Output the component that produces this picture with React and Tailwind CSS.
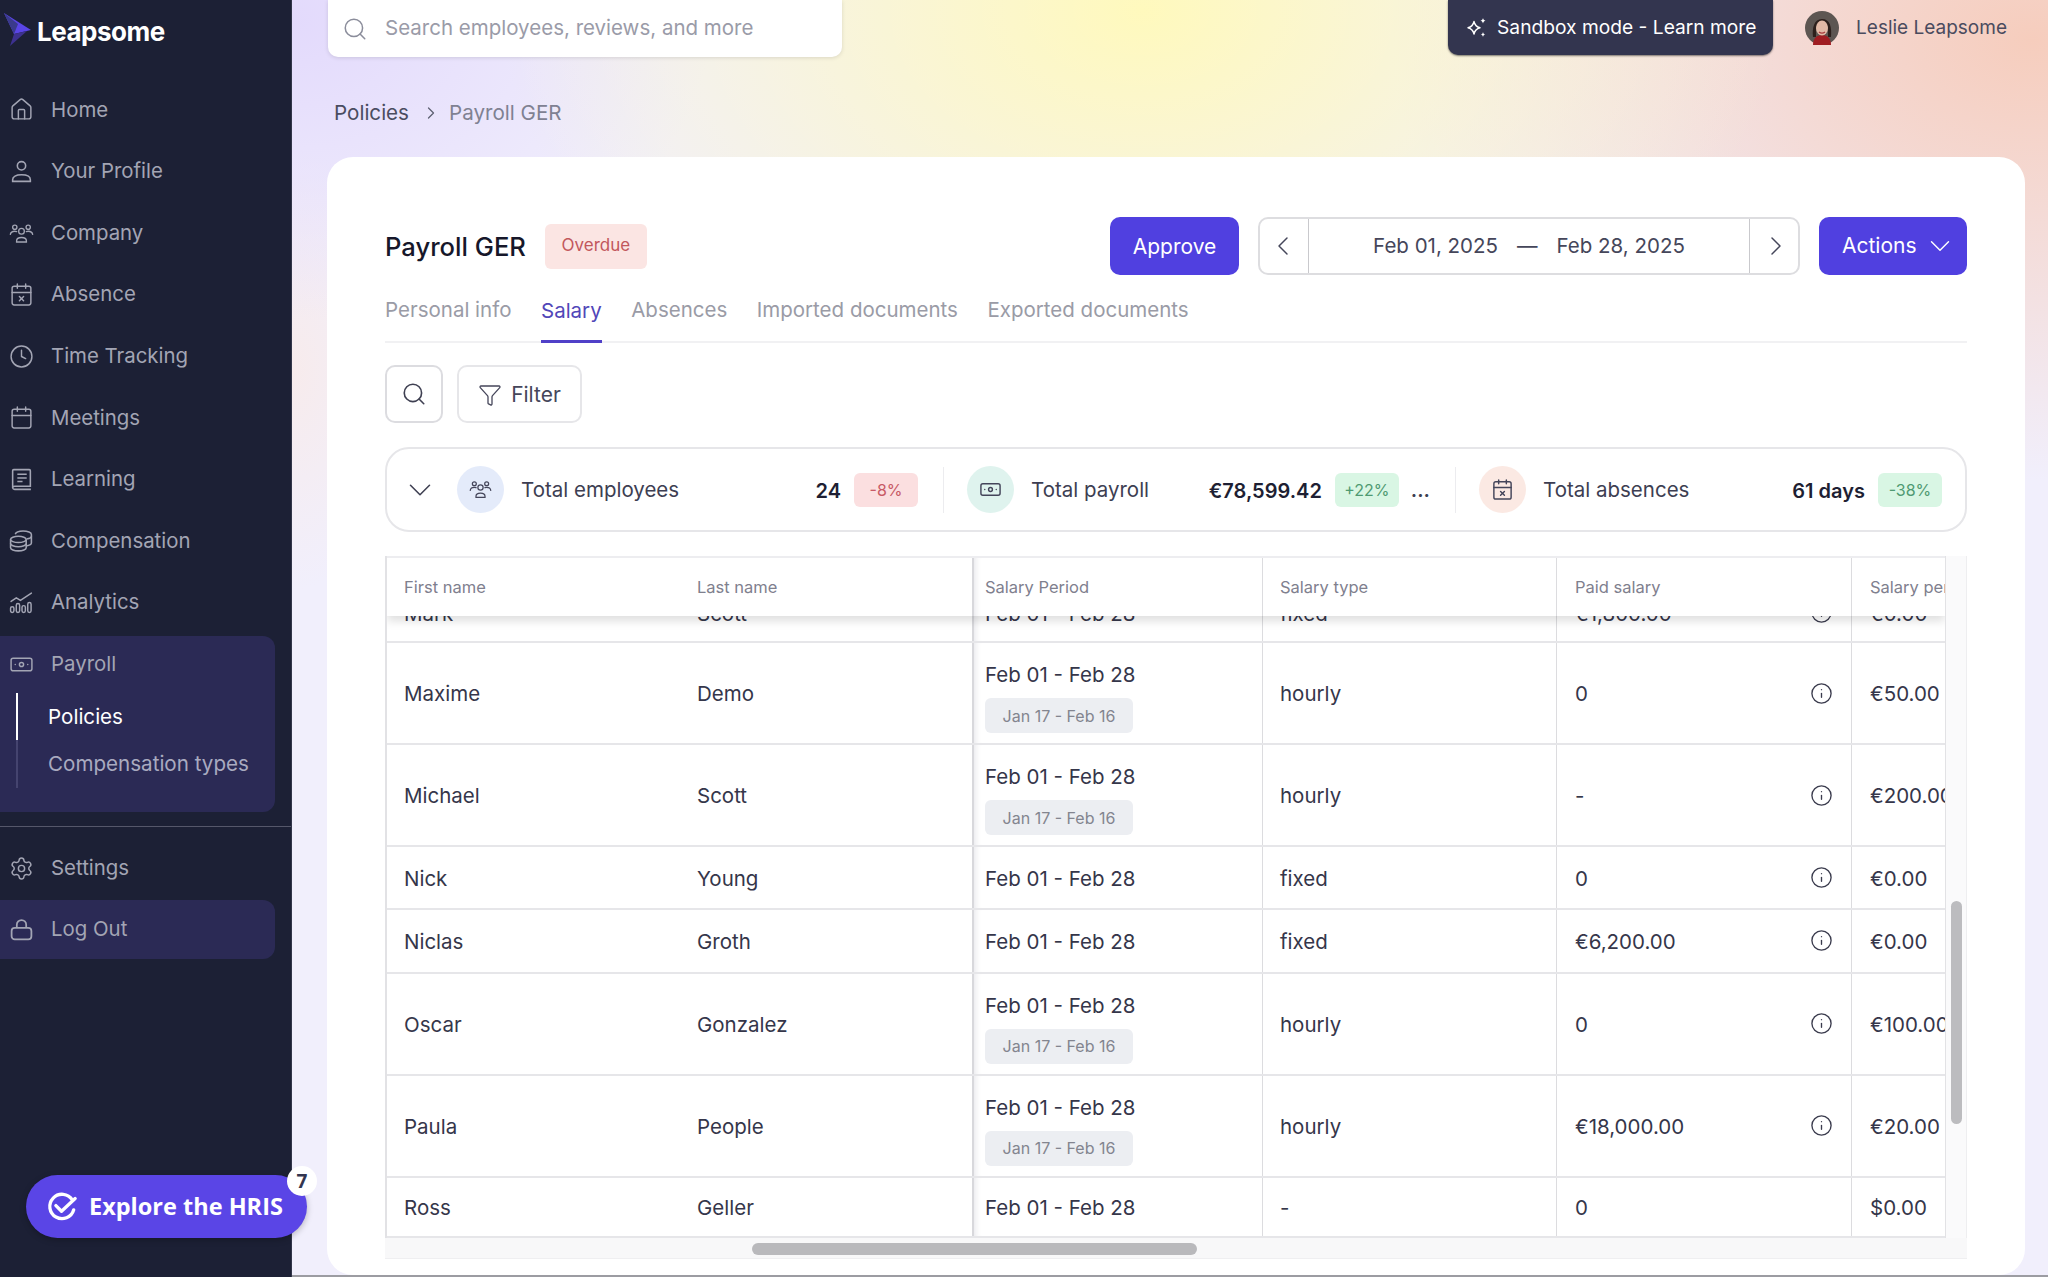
import React from 'react'
import {
  House, CalendarX, Clock, Calendar, Banknote, Settings,
  Search, ChevronRight, ChevronLeft, ChevronDown, Funnel, Info,
} from 'lucide-react'

const ProfileIcon = ({ className }) => (
  <svg viewBox="0 0 24 24" fill="none" stroke="currentColor" strokeWidth="1.5" className={className}>
    <circle cx="12" cy="6.500" r="4" />
    <path d="M3.500 21.500v-1.500c0-3 3.200-4.800 8.500-4.800s8.500 1.800 8.500 4.800v1.500z" />
  </svg>
)

const BookIcon = ({ className }) => (
  <svg viewBox="0 0 24 24" fill="none" stroke="currentColor" strokeWidth="1.5" className={className}>
    <path d="M3.500 20V3.500a1 1 0 0 1 1-1h15a1 1 0 0 1 1 1v15h-15a2 2 0 0 0-2 1.500 2 2 0 0 0 2 1.500h15.500" />
    <path d="M8 7h9M8 10.500h9M8 14h5" />
  </svg>
)

const LockIcon = ({ className }) => (
  <svg viewBox="0 0 24 24" fill="none" stroke="currentColor" strokeWidth="1.700" className={className}>
    <rect x="2.500" y="10.500" width="19" height="11" rx="3" />
    <path d="M7.500 10.500V7.500a4.500 4.500 0 0 1 9 0v3" />
  </svg>
)

const CompanyIcon = ({ className }) => (
  <svg viewBox="0 0 28 24" fill="none" stroke="currentColor" strokeWidth="1.5" strokeLinecap="round" className={className}>
    <circle cx="14" cy="9.500" r="3.200" />
    <path d="M8.500 21.500v-1.200c0-2.400 2-3.800 5.500-3.800s5.500 1.400 5.500 3.800v1.200z" />
    <circle cx="6.500" cy="5" r="2.400" />
    <circle cx="21.500" cy="5" r="2.400" />
    <path d="M1.500 13c.4-2.200 2.200-3.500 5-3.500 .8 0 1.500.1 2.100.3" />
    <path d="M26.500 13c-.4-2.200-2.200-3.500-5-3.500-.8 0-1.500.1-2.100.3" />
  </svg>
)

const CoinsIcon = ({ className }) => (
  <svg viewBox="0 0 24 24" fill="none" stroke="currentColor" strokeWidth="1.500" className={className}>
    <ellipse cx="9" cy="10" rx="7.500" ry="3" />
    <path d="M1.500 10v8c0 1.700 3.400 3 7.500 3s7.500-1.300 7.500-3v-8" />
    <path d="M1.500 14c0 1.700 3.400 3 7.500 3s7.500-1.300 7.500-3" />
    <path d="M6 5c.6-1.700 3.700-3 7.500-3 4.400 0 8 1.400 8 3.200v8.300c0 1.200-1.800 2.300-5 2.800" />
    <path d="M17 9.600c2.600-.4 4.500-1.400 4.500-2.600" />
  </svg>
)

const AnalyticsIcon = ({ className }) => (
  <svg viewBox="0 0 24 24" fill="none" stroke="currentColor" strokeWidth="1.400" strokeLinecap="round" className={className}>
    <path d="M2 11l5-3.500 4 2.500L21.500 3" />
    <rect x="1.500" y="16" width="3.200" height="5.500" rx="1.600" />
    <rect x="7" y="13" width="3.200" height="8.500" rx="1.600" />
    <rect x="12.500" y="15" width="3.200" height="6.500" rx="1.600" />
    <rect x="18" y="12" width="3.200" height="9.500" rx="1.600" />
  </svg>
)

const SandboxStar = () => (
  <svg viewBox="0 0 22 20" className="w-[22px] h-[20px] shrink-0">
    <path d="M9 3.500c.8 3.800 2.200 5.300 6 6.300-3.800 1-5.200 2.500-6 6.300-.8-3.800-2.200-5.300-6-6.300 3.800-1 5.200-2.500 6-6.300z" fill="none" stroke="#fff" strokeWidth="1.400" strokeLinejoin="round" />
    <path d="M18 0c.3 1.600 1 2.300 2.500 2.700-1.500.4-2.200 1.100-2.500 2.700-.3-1.600-1-2.300-2.500-2.700 1.500-.4 2.200-1.100 2.500-2.700z" fill="#fff" />
    <path d="M18 14c.3 1.500.9 2.100 2.300 2.500-1.400.4-2 1-2.300 2.500-.3-1.500-.9-2.100-2.300-2.500 1.400-.4 2-1 2.300-2.500z" fill="#fff" />
  </svg>
)

const LeapsomeBird = () => (
  <svg viewBox="0 0 28 34" className="w-[28px] h-[34px] shrink-0">
    <polygon points="1,0 28,17 11,21" fill="#5a45e6" />
    <polygon points="11,21 24,18 7,33" fill="#3d3190" />
    <polygon points="1,0 11,21 15,11" fill="#3a3a8c" />
  </svg>
)

const Avatar = () => (
  <svg viewBox="0 0 34 34" className="w-[34px] h-[34px] shrink-0">
    <circle cx="17" cy="17" r="17" fill="#5d5652" />
    <path d="M8 34c0-6 3-10 9-10s9 4 9 10z" fill="#a01d22" />
    <path d="M8 26c-1-9 1-18 9-18s10 8 9 18h-3V15H11v11z" fill="#2d201c" />
    <ellipse cx="17" cy="17" rx="6" ry="7.500" fill="#e2b9a6" />
    <path d="M14 21c2 1.500 4 1.500 6 0" stroke="#a83a3c" strokeWidth="1.200" fill="none" />
  </svg>
)

const ExploreCheck = () => (
  <svg viewBox="0 0 32 32" fill="none" stroke="#fff" strokeWidth="3.500" strokeLinecap="round" strokeLinejoin="round" className="w-[30px] h-[30px] shrink-0">
    <path d="M27 8.500A13 13 0 1 0 28.500 19" />
    <path d="M9.500 14.500l6 6L30 7" />
  </svg>
)

const navItems = [
  { label: 'Home', icon: House },
  { label: 'Your Profile', icon: ProfileIcon },
  { label: 'Company', icon: CompanyIcon },
  { label: 'Absence', icon: CalendarX },
  { label: 'Time Tracking', icon: Clock },
  { label: 'Meetings', icon: Calendar },
  { label: 'Learning', icon: BookIcon },
  { label: 'Compensation', icon: CoinsIcon },
  { label: 'Analytics', icon: AnalyticsIcon },
]

const NavRow = ({ icon: Icon, label, className = 'h-[61.6px]' }) => (
  <div className={`flex items-center gap-[17px] pl-[9px] ${className}`}>
    <Icon className="w-[25px] h-[25px] text-[#a3a5b4]" strokeWidth={1.4} />
    <span className="text-[20.4px] text-[#a3a5b4]">{label}</span>
  </div>
)

const Sidebar = () => (
  <aside className="w-[292px] shrink-0 bg-[#1c2035] flex flex-col border-r border-[#33364a]">
    <div className="h-[79.2px] flex items-start gap-[6px] pl-[3px] pt-[13px]">
      <LeapsomeBird />
      <span className="text-[26px] leading-[38px] font-bold tracking-[-0.5px] text-white">Leapsome</span>
    </div>
    {navItems.map((item) => (
      <NavRow key={item.label} icon={item.icon} label={item.label} />
    ))}
    <div className="mt-[2px] h-[176px] w-[275px] rounded-r-[12px] bg-[#2b2a55]">
      <NavRow icon={Banknote} label="Payroll" className="h-[57px]" />
      <div className="ml-[16px] flex flex-col border-l-2 border-[#45446f]">
        <div className="-ml-[2px] h-[47.5px] flex items-center pl-[30px] pt-[2px] border-l-2 border-white text-[20.6px] text-white">Policies</div>
        <div className="h-[47.5px] flex items-center pl-[30px] pt-[2px] text-[20.6px] text-[#a9aac0]">Compensation types</div>
      </div>
    </div>
    <div className="mt-[14px] h-px bg-[#55576a]" />
    <NavRow icon={Settings} label="Settings" className="mt-[11px] h-[61.6px]" />
    <div className="mt-[1px] w-[275px] rounded-r-[12px] bg-[#2b2a55]">
      <NavRow icon={LockIcon} label="Log Out" className="h-[58.5px]" />
    </div>
  </aside>
)

const TopBar = () => (
  <div className="flex items-start h-[57px]">
    <div className="w-[514px] ml-[1px] h-[57px] rounded-b-[10px] bg-white shadow-[0_1px_4px_rgba(0,0,0,0.12)] flex items-center gap-[17px] pl-[14px]">
      <Search className="w-[26px] h-[26px] text-[#8b8d9b]" strokeWidth={1.4} />
      <span className="text-[20.5px] leading-[26px] -mt-[2px] text-[#9a9ba8]">Search employees, reviews, and more</span>
    </div>
    <div className="ml-auto w-[325px] h-[55px] rounded-b-[10px] bg-[#33354f] shadow-[0_1px_2px_rgba(0,0,0,0.5)] flex items-center gap-[10px] pl-[17px]">
      <SandboxStar />
      <span className="text-[19.2px] text-white whitespace-nowrap">Sandbox mode - Learn more</span>
    </div>
    <div className="ml-[32px] mr-[18px] h-[55px] flex items-center gap-[17px]">
      <Avatar />
      <span className="text-[19px] pt-[2px] text-[#4a4b5e] whitespace-nowrap">Leslie Leapsome</span>
    </div>
  </div>
)

const Breadcrumb = () => (
  <div className="flex items-center h-[100px] pl-[7px] pt-[12px] text-[20.6px]">
    <span className="text-[#4a4c60]">Policies</span>
    <ChevronRight className="w-[20px] h-[20px] ml-[12px] mr-[8px] text-[#5e6072]" strokeWidth={1.5} />
    <span className="text-[#7f8192]">Payroll GER</span>
  </div>
)

const tabs = ['Personal info', 'Salary', 'Absences', 'Imported documents', 'Exported documents']

const Header = () => (
  <div className="flex items-center h-[58px]">
    <h1 className="text-[25.6px] pt-[2px] font-medium text-[#16172a]">Payroll GER</h1>
    <span className="ml-[19px] w-[102px] h-[45px] flex items-center justify-center rounded-[6px] bg-[#fbe5e3] text-[17px] text-[#c2575c]">Overdue</span>
    <button className="ml-auto w-[129px] h-[58px] pt-[1px] rounded-[10px] bg-[#5040e0] text-[21px] text-white">Approve</button>
    <div className="ml-[19px] w-[542px] h-[58px] flex items-stretch rounded-[10px] border-2 border-[#dddde0] bg-white">
      <div className="w-[49px] pr-[2px] flex items-center justify-center border-r border-[#c9c9cd]">
        <ChevronLeft className="w-[32px] h-[32px] text-[#45465a]" strokeWidth={1.1} />
      </div>
      <div className="flex-1 pt-[1px] flex items-center justify-center gap-[19px] text-[20.5px] text-[#45465a]">
        <span>Feb 01, 2025</span>
        <span>—</span>
        <span>Feb 28, 2025</span>
      </div>
      <div className="w-[49px] pl-[3px] flex items-center justify-center border-l border-[#c9c9cd]">
        <ChevronRight className="w-[32px] h-[32px] text-[#45465a]" strokeWidth={1.1} />
      </div>
    </div>
    <button className="ml-[19px] w-[148px] h-[58px] pl-[23px] rounded-[10px] bg-[#5040e0] text-[21px] text-white flex items-center gap-[6px]">
      Actions
      <ChevronDown className="w-[34px] h-[34px]" strokeWidth={1} />
    </button>
  </div>
)

const Tabs = () => (
  <div className="flex gap-[29.5px] h-[68px] border-b-2 border-[#f1f1f3]">
    {tabs.map((t) =>
      t === 'Salary' ? (
        <div key={t} className="pt-[7px] -mb-[2px] flex items-center border-b-[3px] border-[#5040c8] text-[20.5px] text-[#5146b8]">{t}</div>
      ) : (
        <div key={t} className="pt-[7px] pb-[3px] flex items-center text-[20.5px] text-[#9a9ba6]">{t}</div>
      )
    )}
  </div>
)

const Toolbar = () => (
  <div className="mt-[22px] flex gap-[14px]">
    <div className="w-[58px] h-[58px] flex items-center justify-center rounded-[10px] border-2 border-[#dcdce0]">
      <Search className="w-[26px] h-[26px] text-[#3f4052]" strokeWidth={1.5} />
    </div>
    <div className="w-[125px] h-[58px] pt-[1px] flex items-center justify-center gap-[9px] rounded-[10px] border-2 border-[#e6e6e9] text-[21px] text-[#45465a]">
      <Funnel className="w-[24px] h-[24px]" strokeWidth={1.3} />
      Filter
    </div>
  </div>
)

const Stat = ({ icon: Icon, circle, label, value, pct, pctClass, more, className }) => (
  <div className={`flex items-center ${className}`}>
    <div className={`ml-[23px] w-[47px] h-[47px] rounded-full flex items-center justify-center ${circle}`}>
      <Icon className="w-[23px] h-[23px] text-[#44455a]" strokeWidth={1.5} />
    </div>
    <span className="ml-[17px] pt-[2px] text-[20.5px] text-[#3d3e52] whitespace-nowrap">{label}</span>
    <span className="ml-auto pt-[2px] text-[20px] font-semibold text-[#1e1f33] whitespace-nowrap">{value}</span>
    <span className={`ml-[13px] w-[64px] h-[34px] flex items-center justify-center rounded-[6px] text-[16px] ${pctClass}`}>{pct}</span>
    {more && <span className="ml-[12px] text-[20px] font-semibold text-[#3d3e52]">...</span>}
  </div>
)

const SummaryBar = () => (
  <div className="mt-[24px] h-[85px] w-[1582px] rounded-[24px] border-2 border-[#e6e6e9] flex items-center">
    <div className="w-[47px] shrink-0 pl-[14px]">
      <ChevronDown className="w-[38px] h-[38px] text-[#3f4052]" strokeWidth={1} />
    </div>
    <Stat icon={CompanyIcon} circle="bg-[#e4ebfa]" label="Total employees" value="24" pct="-8%" pctClass="bg-[#fbdfe0] text-[#c85a66]" className="w-[509px] h-[46px] pr-[25px]" />
    <Stat icon={Banknote} circle="bg-[#dff3ee]" label="Total payroll" value="€78,599.42" pct="+22%" pctClass="bg-[#d9f6e4] text-[#4f9a72]" more className="w-[512px] h-[46px] pr-[25px] border-l border-[#ececef]" />
    <Stat icon={CalendarX} circle="bg-[#fbe9e3]" label="Total absences" value="61 days" pct="-38%" pctClass="bg-[#d9f6e4] text-[#4f9a72]" className="w-[510px] h-[46px] pr-[23px] border-l border-[#ececef]" />
  </div>
)

const rows = [
  { first: 'Mark', last: 'Scott', type: 'fixed', paid: '€1,800.00', per: '€0.00', info: true, h: '-mt-[36px] h-[63px] pt-[4px]' },
  { first: 'Maxime', last: 'Demo', type: 'hourly', paid: '0', per: '€50.00', info: true, sub: true, h: 'h-[102px]' },
  { first: 'Michael', last: 'Scott', type: 'hourly', paid: '-', per: '€200.00', info: true, sub: true, h: 'h-[102px]' },
  { first: 'Nick', last: 'Young', type: 'fixed', paid: '0', per: '€0.00', info: true, h: 'h-[63px]' },
  { first: 'Niclas', last: 'Groth', type: 'fixed', paid: '€6,200.00', per: '€0.00', info: true, h: 'h-[63.5px]' },
  { first: 'Oscar', last: 'Gonzalez', type: 'hourly', paid: '0', per: '€100.00', info: true, sub: true, h: 'h-[102px]' },
  { first: 'Paula', last: 'People', type: 'hourly', paid: '€18,000.00', per: '€20.00', info: true, sub: true, h: 'h-[102px]' },
  { first: 'Ross', last: 'Geller', type: '-', paid: '0', per: '$0.00', h: 'h-[60px]' },
]

const gridCols = 'grid grid-cols-[290px_295px_290px_294px_295px_95px]'
const stickyCol = 'border-l-2 border-[#d8d8dc] shadow-[inset_7px_0_6px_-6px_rgba(60,60,90,0.14)]'

const TableHeader = () => (
  <div className={`${gridCols} relative z-10 h-[60px] bg-white border-t-2 border-[#ededf0] shadow-[0_5px_9px_rgba(0,0,0,0.13)] text-[16.5px] text-[#7f808e]`}>
    <div className="pl-[17px] flex items-center">First name</div>
    <div className="pl-[20px] flex items-center">Last name</div>
    <div className={`pl-[11px] flex items-center ${stickyCol}`}>Salary Period</div>
    <div className="pl-[17px] flex items-center border-l border-[#dcdcdf]">Salary type</div>
    <div className="pl-[18px] flex items-center border-l border-[#dcdcdf]">Paid salary</div>
    <div className="pl-[18px] flex items-center border-l border-[#dcdcdf] overflow-hidden whitespace-nowrap">Salary per hour</div>
  </div>
)

const TableRow = ({ row }) => (
  <div className={`${gridCols} ${row.h} border-b-2 border-[#e6e6e9] text-[20.5px] text-[#35364a]`}>
    <div className="pl-[17px] pt-[3px] flex items-center">{row.first}</div>
    <div className="pl-[20px] pt-[3px] flex items-center">{row.last}</div>
    {row.sub ? (
      <div className={`pl-[11px] pt-[20px] ${stickyCol}`}>
        <div className="leading-[24px] whitespace-nowrap">Feb 01 - Feb 28</div>
        <div className="mt-[11px] w-[148px] h-[35px] flex items-center justify-center rounded-[6px] bg-[#eceef2] text-[16px] text-[#83858f]">Jan 17 - Feb 16</div>
      </div>
    ) : (
      <div className={`pl-[11px] pt-[3px] flex items-center whitespace-nowrap ${stickyCol}`}>Feb 01 - Feb 28</div>
    )}
    <div className="pl-[17px] pt-[3px] flex items-center border-l border-[#dcdcdf]">{row.type}</div>
    <div className="pl-[18px] pr-[18px] flex items-center justify-between border-l border-[#dcdcdf]">
      <span className="pt-[3px]">{row.paid}</span>
      {row.info && <Info className="w-[23px] h-[23px] text-[#3a3b4d]" strokeWidth={1.4} />}
    </div>
    <div className="pl-[18px] pt-[3px] flex items-center border-l border-[#dcdcdf] overflow-hidden whitespace-nowrap">{row.per}</div>
  </div>
)

const SalaryTable = () => (
  <div className="mt-[24px] w-[1582px] h-[703px] flex flex-col">
    <div className="flex h-[682px]">
      <div className="w-[1561px] border-l-2 border-r border-[#e2e2e5] overflow-hidden">
        <TableHeader />
        <div>
          {rows.map((row) => (
            <TableRow key={row.first} row={row} />
          ))}
        </div>
      </div>
      <div className="w-[21px] bg-[#fafafb] border-r border-[#eeeef0] pl-[5px] pt-[345px]">
        <div className="w-[11px] h-[223px] rounded-full bg-[#bcbcbf]" />
      </div>
    </div>
    <div className="h-[21px] bg-[#f8f8f9] border-b border-[#efeff1] pl-[367px] pt-[5px]">
      <div className="w-[445px] h-[12px] rounded-full bg-[#b9b9bc]" />
    </div>
  </div>
)

export default function App() {
  return (
    <div className="relative flex w-[2048px] h-[1277px] overflow-hidden font-['Inter',sans-serif]">
      <Sidebar />
      <main className="flex-1 flex flex-col pl-[35px] pr-[23px] bg-[radial-gradient(ellipse_640px_420px_at_850px_10px,#fff9bd,transparent),radial-gradient(ellipse_640px_440px_at_1740px_40px,#f6cdbd,transparent),radial-gradient(ellipse_420px_300px_at_0px_20px,#e3dafc,transparent),radial-gradient(ellipse_120px_220px_at_0px_370px,#f7ebec,transparent),linear-gradient(#f1effc,#f1effc)]">
        <TopBar />
        <Breadcrumb />
        <section className="h-[1118px] rounded-[26px] bg-white px-[58px] pt-[60px]">
          <Header />
          <Tabs />
          <Toolbar />
          <SummaryBar />
          <SalaryTable />
        </section>
        <div className="h-[2px] -mx-[35px] bg-[#9c9ca2]" />
      </main>
      <div className="absolute left-[26px] top-[1175px] w-[281px] h-[63px] rounded-full bg-[#5a45e6] shadow-[0_2px_6px_rgba(0,0,0,0.25)] flex items-center gap-[12px] pl-[21px]">
        <ExploreCheck />
        <span className="text-[23.5px] font-bold text-white font-['Open_Sans',sans-serif] whitespace-nowrap">Explore the HRIS</span>
        <span className="absolute -top-[9px] -right-[10px] w-[30px] h-[30px] rounded-full bg-white flex items-center justify-center text-[19px] font-bold text-[#33354f] font-['Open_Sans',sans-serif]">7</span>
      </div>
    </div>
  )
}
